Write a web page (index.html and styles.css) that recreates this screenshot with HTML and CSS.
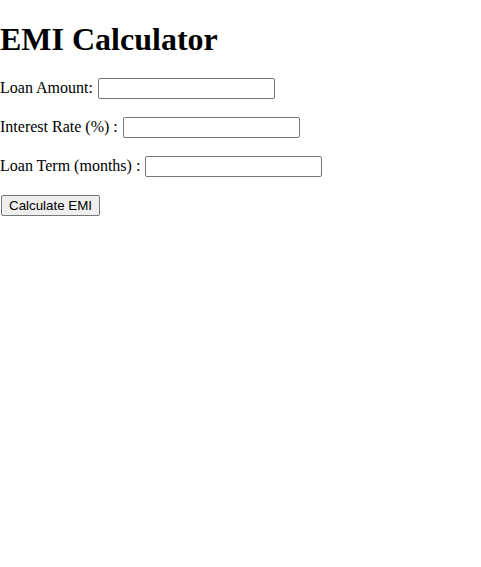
FILE: index.html
```html
<!DOCTYPE html>
<html>
<head>
<meta charset="utf-8">
<title>EMI Calculator</title>
<link rel="stylesheet" href="styles.css">
</head>
<body>
<h1 class="title">EMI Calculator</h1>
<p class="row"><label>Loan Amount:</label> <input class="field" type="text"></p>
<p class="row"><label>Interest Rate (%) :</label> <input class="field" type="text"></p>
<p class="row"><label>Loan Term (months) :</label> <input class="field" type="text"></p>
<p class="row"><button class="btn">Calculate EMI</button></p>
</body>
</html>
```
FILE: styles.css
```css
body {
  margin: 0;
  font-family: "Liberation Serif", "Times New Roman", serif;
  font-size: 16px;
  color: #000;
  background: #fff;
}
.title {
  font-size: 2em;
  font-weight: bold;
  margin: 21px 0 20px;
}
.row {
  margin: 16px 0;
}
.field {
  width: 177px;
  height: 21px;
  box-sizing: border-box;
  border: 1px solid #767676;
  border-radius: 2px;
  padding: 1px 2px;
  margin: 0 0 2px 1px;
  font-family: "Liberation Sans", Arial, sans-serif;
  font-size: 13.33px;
}
.btn {
  font-family: "Liberation Sans", Arial, sans-serif;
  font-size: 13.33px;
  padding: 1px 6px;
  border: 1px solid #767676;
  border-radius: 2px;
  background: #efefef;
  color: #000;
  height: 21px;
  width: 99px;
  margin-left: 1px;
  box-sizing: border-box;
}
```
